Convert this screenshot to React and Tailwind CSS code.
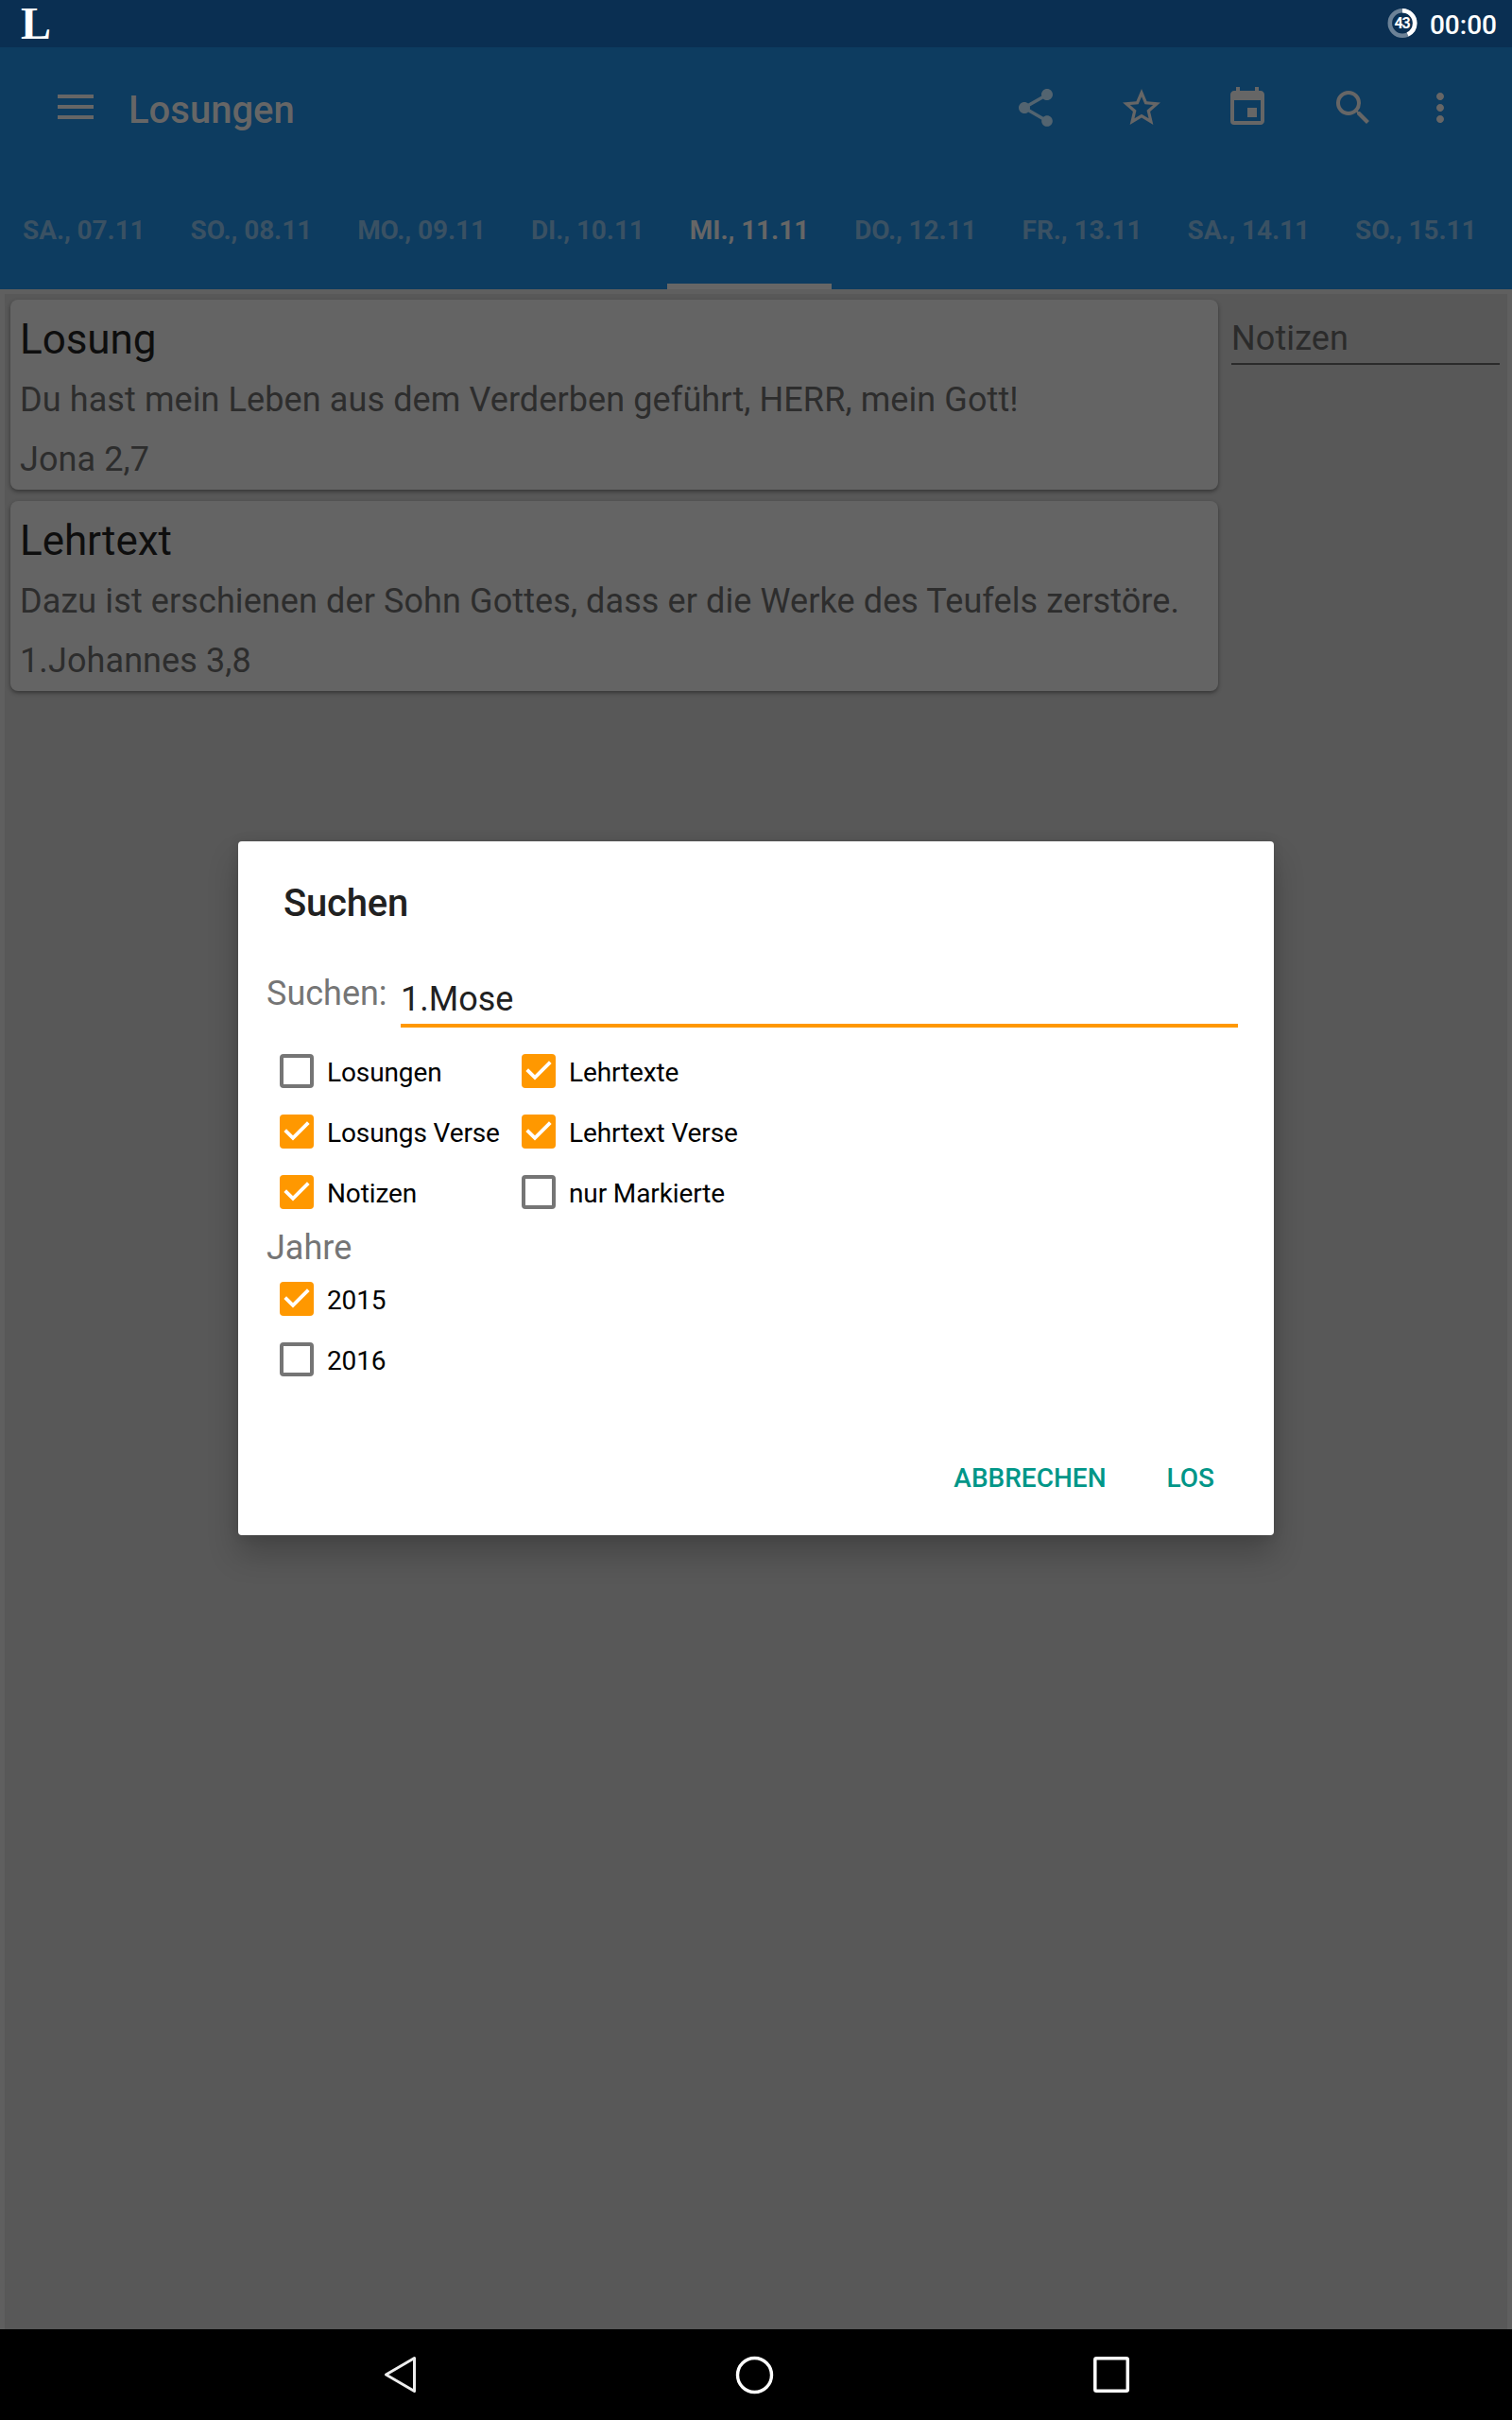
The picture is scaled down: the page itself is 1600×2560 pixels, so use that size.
import React from "react";
import { MdShare, MdStarBorder, MdEvent, MdSearch, MdMoreVert } from "react-icons/md";

const tabs = ["SA., 07.11", "SO., 08.11", "MO., 09.11", "DI., 10.11", "MI., 11.11", "DO., 12.11", "FR., 13.11", "SA., 14.11", "SO., 15.11"];

function StatusBar() {
  return (
    <div className="flex h-[50px] items-center justify-between bg-[#0a2f52] pr-4 pl-[22px] text-white">
      <span className="font-['Liberation_Serif',serif] text-[48px] leading-[50px] font-bold">L</span>
      <div className="flex items-center">
        <svg className="mr-[13px] h-8 w-8" viewBox="0 0 32 32">
          <circle cx="16" cy="15.5" r="13.2" fill="none" stroke="#6c8297" strokeWidth="4.6" />
          <circle cx="16" cy="15.5" r="13.2" fill="none" stroke="#fff" strokeWidth="4.6" pathLength="100" strokeDasharray="43 57" transform="rotate(-90 16 15.5)" />
          <text x="15.6" y="21.2" textAnchor="middle" fontSize="16" fontWeight="700" letterSpacing="-1" fill="#fff">43</text>
        </svg>
        <span className="pt-1 text-[28px] leading-[46px] font-medium">00:00</span>
      </div>
    </div>
  );
}

function AppBar() {
  return (
    <header className="h-64 bg-[#0d3c60] text-[#666]">
      <div className="flex h-32 items-center">
        <div className="ml-[61px] flex w-[38px] flex-col gap-[7px] pb-[2px]">
          <div className="h-1 bg-[#666]" />
          <div className="h-1 bg-[#666]" />
          <div className="h-1 bg-[#666]" />
        </div>
        <h1 className="ml-[37px] grow pt-[5px] text-[40px] leading-[48px] font-medium">Losungen</h1>
        <div className="mr-[52px] flex items-center gap-16">
          <MdShare size={48} className="text-[#536470]" />
          <MdStarBorder size={48} />
          <MdEvent size={48} />
          <MdSearch size={48} />
          <MdMoreVert size={48} className="-ml-5" />
        </div>
      </div>
      <nav className="flex h-32 text-[28px] font-bold tracking-[-0.08px]">
        {tabs.map((t, i) => (
          <div
            key={t}
            className={
              i === 4
                ? "flex h-32 items-center border-b-[6px] border-[#666] px-6 pt-[10px] whitespace-nowrap"
                : "flex h-32 items-center px-6 pt-[4px] whitespace-nowrap text-[#3a5163]"
            }
          >
            {t}
          </div>
        ))}
      </nav>
    </header>
  );
}

function Card({ title, text, source }) {
  return (
    <section className="h-[201px] rounded-lg bg-[#646464] px-[10px] pt-4 text-[36px] text-[#2d2d2d] shadow-[0_2px_4px_rgba(0,0,0,0.4)]">
      <h2 className="text-[44px] leading-[52px] tracking-[-0.05px] text-[#0e0e0e]">{title}</h2>
      <p className="mt-[17px] leading-[42px] tracking-[0.1px] whitespace-nowrap">{text}</p>
      <p className="mt-[21px] leading-[42px] tracking-[0.1px]">{source}</p>
    </section>
  );
}

function Check({ label, checked }) {
  return (
    <div className="flex h-16 items-center">
      {checked ? (
        <svg className="h-9 w-9" viewBox="0 0 36 36">
          <rect width="36" height="36" rx="4" fill="#ff9800" />
          <path d="M5.7 16.6 14 24.9 30.3 8.6" fill="none" stroke="#fff" strokeWidth="3.8" />
        </svg>
      ) : (
        <div className="h-9 w-9 rounded-[4px] border-4 border-[#757575]" />
      )}
      <span className="ml-[14px] pt-[3px] text-[28px] leading-8 tracking-[-0.12px] text-black">{label}</span>
    </div>
  );
}

function Dialog() {
  return (
    <div className="absolute top-[890px] left-[252px] flex h-[734px] w-[1096px] flex-col rounded-[4px] bg-white text-[#212121] shadow-[0_20px_32px_rgba(0,0,0,0.22),0_0_12px_rgba(0,0,0,0.1)]">
      <h2 className="mt-[42px] ml-12 text-[40px] leading-[48px] font-medium tracking-[-0.2px]">Suchen</h2>
      <div className="mt-[42px] flex h-[65px] pr-[38px] pl-[30px] text-[36px] leading-[42px]">
        <span className="pt-[8px] text-[#757575]">Suchen:</span>
        <div className="ml-auto w-[886px] border-b-4 border-[#ff9800] pt-[14px]">1.Mose</div>
      </div>
      <div className="mt-[14px] ml-11 grid grid-cols-[256px_1fr]">
        <Check label="Losungen" />
        <Check label="Lehrtexte" checked />
        <Check label="Losungs Verse" checked />
        <Check label="Lehrtext Verse" checked />
        <Check label="Notizen" checked />
        <Check label="nur Markierte" />
      </div>
      <div className="ml-[30px] h-[49px] pt-[6px] text-[36px] leading-[42px] text-[#757575]">Jahre</div>
      <div className="ml-11">
        <Check label="2015" checked />
        <Check label="2016" />
      </div>
      <div className="mt-auto mr-[63px] mb-[44px] flex justify-end gap-16 text-[28px] leading-8 font-medium text-[#009688]">
        <span>ABBRECHEN</span>
        <span>LOS</span>
      </div>
    </div>
  );
}

function NavBar() {
  return (
    <footer className="flex h-24 items-center bg-black">
      <svg className="ml-[400px] h-12 w-12" viewBox="0 0 48 48" fill="none" stroke="#eee" strokeWidth="3" strokeLinejoin="round">
        <path d="M38.5 6.5v35L8.5 24z" />
      </svg>
      <svg className="ml-[327px] h-12 w-12" viewBox="0 0 48 48" fill="none" stroke="#fff" strokeWidth="3.4">
        <circle cx="23.5" cy="24.5" r="18" />
      </svg>
      <svg className="ml-[329px] h-12 w-12" viewBox="0 0 48 48" fill="none" stroke="#fff" strokeWidth="3.5">
        <rect x="6.8" y="6.8" width="34.5" height="34.5" rx="1.5" />
      </svg>
    </footer>
  );
}

export default function App() {
  return (
    <div className="relative flex h-[2560px] w-[1600px] flex-col overflow-hidden bg-[#5f5f5f] font-[Roboto,sans-serif]">
      <StatusBar />
      <AppBar />
      <main className="mx-[5px] mt-[5px] flex grow bg-[#585858]">
        <div className="mt-[6px] ml-[6px] flex w-[1278px] flex-col gap-3">
          <Card title="Losung" text="Du hast mein Leben aus dem Verderben geführt, HERR, mein Gott!" source="Jona 2,7" />
          <Card title="Lehrtext" text="Dazu ist erschienen der Sohn Gottes, dass er die Werke des Teufels zerstöre." source="1.Johannes 3,8" />
        </div>
        <div className="mt-[25px] ml-[14px] h-[50px] w-[284px] border-b-2 border-[#2b2b2b] pt-[1px] text-[36px] leading-[42px] tracking-[0.1px] text-[#2b2b2b]">Notizen</div>
      </main>
      <NavBar />
      <Dialog />
    </div>
  );
}
